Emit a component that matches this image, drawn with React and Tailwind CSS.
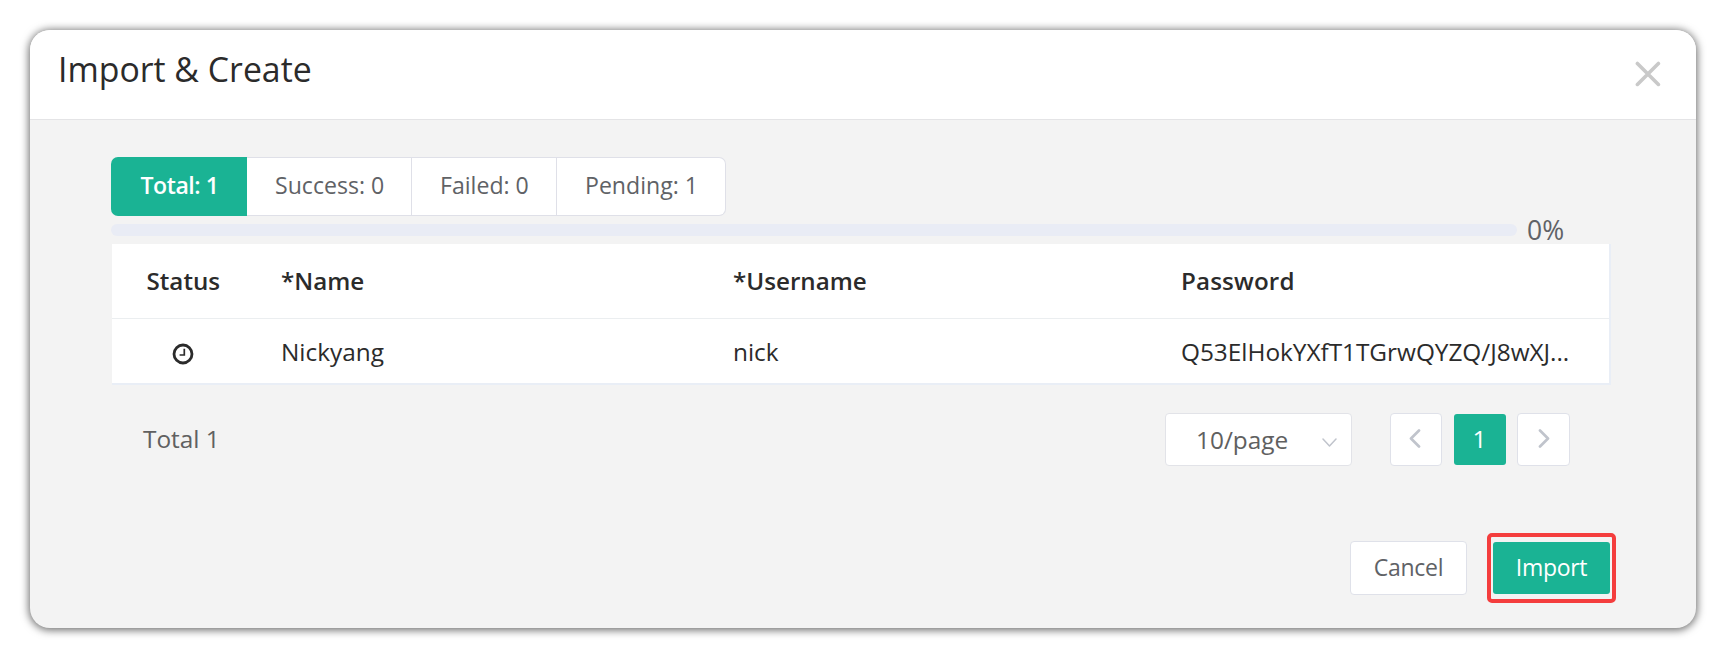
const tabs = [
  { label: "Total: 1", className: "w-[136px] rounded-l-[7px] bg-[#1ab394] pl-[29.5px] font-semibold leading-[57px] tracking-[-0.45px] text-white" },
  { label: "Success: 0", className: "w-[165px] border-y border-r border-[#dfe0e8] bg-white pl-7 text-[#606266]" },
  { label: "Failed: 0", className: "w-[145px] border-y border-r border-[#dfe0e8] bg-white pl-7 text-[#606266]" },
  { label: "Pending: 1", className: "w-[169px] rounded-r-[7px] border-y border-r border-[#dfe0e8] bg-white pl-7 text-[#606266]" },
];

function CloseIcon() {
  return (
    <svg width="26" height="26" viewBox="0 0 26 26" fill="none" stroke="#c9c9c9" strokeWidth="3.6" strokeLinecap="round">
      <path d="M2.4 2.4 23.4 23.4M23.4 2.4 2.4 23.4" />
    </svg>
  );
}

function ClockIcon() {
  return (
    <svg width="22" height="22" viewBox="0 0 22 22" fill="none" stroke="#2b2b2b">
      <circle cx="11" cy="11" r="9" strokeWidth="2.8" />
      <path d="M12.3 5.8V12H7.6" strokeWidth="1.7" />
    </svg>
  );
}

function Chevron({ d, ...rest }) {
  return (
    <svg fill="none" stroke="#c0c4cc" strokeLinecap="round" strokeLinejoin="round" {...rest}>
      <path d={d} />
    </svg>
  );
}

export default function App() {
  return (
    <div className="h-[648px] w-[1726px] bg-white p-[30px] pb-5 font-['Open_Sans',sans-serif] whitespace-nowrap">
      <div className="flex h-[598px] flex-col overflow-hidden rounded-[20px] bg-[#f3f3f3] shadow-[0_1px_8px_1px_rgba(0,0,0,0.6)]">
        <header className="flex h-[90px] shrink-0 items-start justify-between border-b border-[#e4e4e6] bg-white pt-[18px] pr-[35px] pl-7">
          <h1 className="text-[33.8px] leading-[42px] text-[#2b2b2b]">Import &amp; Create</h1>
          <button className="pt-[13px]" aria-label="Close"><CloseIcon /></button>
        </header>

        <main className="flex flex-col pl-[81px]">
          <div className="mt-[37px] flex h-[59px] text-[23.1px] leading-[54px]">
            {tabs.map((t) => (
              <div key={t.label} className={t.className}>{t.label}</div>
            ))}
          </div>

          <div className="mt-2 flex h-3 items-center">
            <div className="h-3 w-[1406px] rounded-full bg-[#e9ecf5]" />
            <span className="pl-[10px] text-[26.5px] leading-3 text-[#606266]">0%</span>
          </div>

          <div className="mt-2 ml-px w-[1499px] border-r-2 border-b-2 border-[#e9eef6] bg-white text-[24.4px] text-[#2b2b2b]">
            <div className="grid h-[75px] grid-cols-[169px_452px_448px_1fr] border-b border-[#ebeef0] text-[24.2px] font-semibold leading-[74px]">
              <span className="pl-[34.5px]">Status</span>
              <span>*Name</span>
              <span>*Username</span>
              <span className="tracking-[0.15px]">Password</span>
            </div>
            <div className="grid h-16 grid-cols-[169px_452px_448px_1fr] leading-[66px]">
              <span className="pt-6 pl-[60px]"><ClockIcon /></span>
              <span>Nickyang</span>
              <span>nick</span>
              <span className="tracking-[-0.03px]">Q53ElHokYXfT1TGrwQYZQ/J8wXJ...</span>
            </div>
          </div>

          <div className="mt-7 flex h-[53px] items-start text-[24.4px] text-[#606060]">
            <span className="w-[1054px] pl-8 leading-[52px]">Total 1</span>
            <div className="flex h-[53px] w-[187px] items-center rounded border border-[#e2e3e8] bg-white pl-[30px] leading-[50px]">
              <span className="w-[126px]">10/page</span>
              <Chevron d="M1 1 7.5 8 14 1" width="15" height="9" className="mt-1.5" strokeWidth="1.5" />
            </div>
            <div className="ml-[38px] flex gap-[11.5px]">
              <button className="flex h-[53px] w-[52px] items-center justify-center rounded border border-[#dfe1e9] bg-white pb-0.5 pr-0.5">
                <Chevron d="M10 1.5 2 9.5 10 17.5" width="12" height="19" strokeWidth="2.7" />
              </button>
              <button className="mt-px h-[51px] w-[52px] rounded-[3px] bg-[#1ab394] pb-0.5 font-medium leading-[48px] text-white">1</button>
              <button className="flex h-[53px] w-[53px] items-center justify-center rounded border border-[#dfe1e9] bg-white pb-0.5">
                <Chevron d="M2 1.5 10 9.5 2 17.5" width="12" height="19" strokeWidth="2.7" />
              </button>
            </div>
          </div>
        </main>

        <footer className="mt-[67px] flex justify-end pr-20 text-[23px] leading-[50px]">
          <button className="mt-2 h-[54px] w-[117px] rounded border border-[#dfe1e9] bg-white pb-0.5 tracking-[-0.3px] text-[#606266]">Cancel</button>
          <div className="ml-5 h-[70px] w-[129px] rounded-[5px] border-4 border-[#f43d3d] pt-[5px] pr-0.5 pl-0.5">
            <button className="h-[52px] w-full rounded-[3px] bg-[#1ab394] pb-0.5 font-medium tracking-[-0.3px] text-white">Import</button>
          </div>
        </footer>
      </div>
    </div>
  );
}
